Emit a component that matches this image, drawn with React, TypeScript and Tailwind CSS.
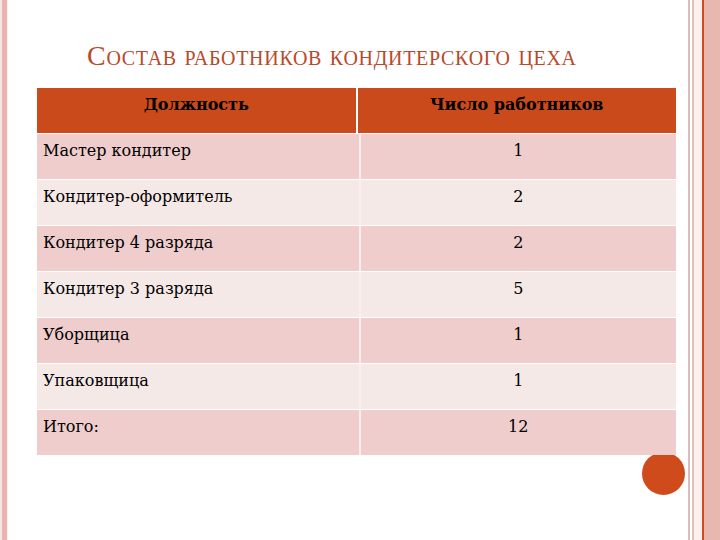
const rows: [string, string][] = [
  ['Мастер кондитер', '1'],
  ['Кондитер-оформитель', '2'],
  ['Кондитер 4 разряда', '2'],
  ['Кондитер 3 разряда', '5'],
  ['Уборщица', '1'],
  ['Упаковщица', '1'],
  ['Итого:', '12'],
];

export default function App() {
  return (
    <div className="flex w-[720px] h-[540px] bg-white overflow-hidden font-['DejaVu_Serif','Liberation_Serif',serif]">
      {/* left frame */}
      <div className="w-[2px] bg-[#f6e6e4]" />
      <div className="w-[5px] bg-[#e7b4af]" />
      <div className="w-[1px] bg-[#fbeeed]" />

      <div className="relative flex-1 pl-[29px] pr-[12px]">
        <h1 className="pt-[40px] pl-[50px] h-[88px] font-['Liberation_Serif',serif] text-[28px] leading-[32px] text-[#b9492a] [font-variant-caps:small-caps] tracking-[0.7px]">
          Состав работников кондитерского цеха
        </h1>

        <div className="absolute left-[634px] top-[452px] w-[43px] h-[43px] rounded-full bg-[#cf4b1c]" />

        <div className="relative flex flex-col gap-px">
          <div className="flex gap-[2px] h-[45px] bg-white">
            <div className="flex-1 bg-[#cb4a1b] pt-[5px] text-center text-[16px] font-bold text-black">
              Должность
            </div>
            <div className="flex-1 bg-[#cb4a1b] pt-[5px] text-center text-[16px] font-bold text-black">
              Число работников
            </div>
          </div>
          {rows.map(([name, count], i) => {
            const bg = i % 2 === 0 ? 'bg-[#eecdcc]' : 'bg-[#f5e9e7]';
            return (
              <div key={name} className="flex gap-[2px] h-[45px] bg-[#f8eeed]">
                <div className={`flex-1 pl-[6px] pt-[5px] text-[16px] text-black ${bg}`}>{name}</div>
                <div className={`flex-1 pt-[5px] text-center text-[16px] text-black ${bg}`}>{count}</div>
              </div>
            );
          })}
        </div>
      </div>

      {/* right frame */}
      <div className="w-[2px] bg-[#dcbcb8]" />
      <div className="w-[2px] bg-white" />
      <div className="w-[2px] bg-[#dcc0bc]" />
      <div className="w-[8px] bg-[#fbf0ee]" />
      <div className="w-[2px] bg-[#d24b22]" />
      <div className="w-[16px] bg-[#e8b8b0]" />
    </div>
  );
}
